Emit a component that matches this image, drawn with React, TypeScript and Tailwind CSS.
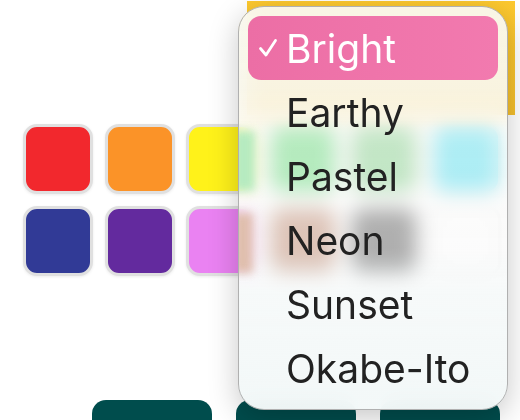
const rows = [
  ['bg-[#f2282d]', 'bg-[#fb9328]', 'bg-[#fff21a]', 'bg-[#17c839]', 'bg-[#46b953]', 'bg-[#00d0ec]'],
  ['bg-[#313a96]', 'bg-[#632a9e]', 'bg-[#ea82f2]', 'bg-[#a0522d]', 'bg-[#111111]', 'bg-white'],
];

const palettes = ['Bright', 'Earthy', 'Pastel', 'Neon', 'Sunset', 'Okabe-Ito'];

export default function App() {
  return (
    <div className="relative h-[420px] w-[520px] overflow-hidden bg-white font-['Inter',sans-serif]">
      {/* Yellow block behind the menu */}
      <div className="ml-[247px] mt-px h-[114px] w-[268px] bg-[linear-gradient(180deg,#fdc92f,#f5bf2d)]" />

      {/* Swatches */}
      <div className="ml-[23px] mt-[9px] grid grid-cols-[repeat(6,70px)] gap-x-[11.5px] gap-y-[11.7px]">
        {rows.flat().map((color, i) => (
          <div
            key={i}
            className={`h-[70px] w-[70px] rounded-[14px] border-[3px] border-[#e0e0e0] shadow-[0_1px_3px_rgba(0,0,0,0.08)] ${color}`}
          />
        ))}
      </div>

      {/* Bottom buttons */}
      <div className="ml-[92px] mt-[124.3px] flex gap-6">
        <div className="h-[40px] w-[120px] rounded-[14px] bg-[#004d4d]" />
        <div className="h-[40px] w-[120px] rounded-[14px] bg-[#004d4d]" />
        <div className="h-[40px] w-[120px] rounded-[14px] bg-[#004d4d]" />
      </div>

      {/* Dropdown menu */}
      <div className="absolute left-[238px] top-[6px] w-[270px] overflow-hidden rounded-[26px] border border-[#b0b0b0] bg-[linear-gradient(180deg,rgba(249,248,240,0.95)_0%,rgba(248,247,238,0.93)_20%,rgba(250,248,240,0.88)_27%,rgba(250,250,248,0.7)_30%,rgba(250,250,250,0.68)_60%,rgba(244,248,248,0.8)_72%,rgba(243,248,248,0.97)_95%)] p-[9px] shadow-[0_8px_30px_rgba(0,0,0,0.22)] backdrop-blur-[10px]">
        {/* Tints of the neighbouring swatches along the menu's left edge */}
        <div className="absolute left-[-6px] top-[124px] h-[60px] w-[22px] bg-[#b6ebc0] blur-[4px]" />
        <div className="absolute left-[-6px] top-[206px] h-[60px] w-[20px] bg-[#e0bfae] blur-[4px]" />

        {palettes.map((name, i) => (
          <div
            key={name}
            className={`relative flex h-[64px] items-center rounded-[13px] text-[39px] font-[420] ${
              i === 0 ? 'bg-[linear-gradient(90deg,#ec6ea5,#f27aaf)] text-white' : 'text-[#222222]'
            }`}
          >
            <div className="flex w-[38px] shrink-0 items-center justify-center">
              {i === 0 && (
                <svg width="20" height="20" viewBox="0 0 20 20" fill="none" className="ml-[1px]">
                  <path d="M2.5 10.5 L8 17 L17.5 2.5" stroke="white" strokeWidth="2.8" strokeLinecap="round" strokeLinejoin="round" />
                </svg>
              )}
            </div>
            <span className="pt-[3px]">{name}</span>
          </div>
        ))}
      </div>
    </div>
  );
}
